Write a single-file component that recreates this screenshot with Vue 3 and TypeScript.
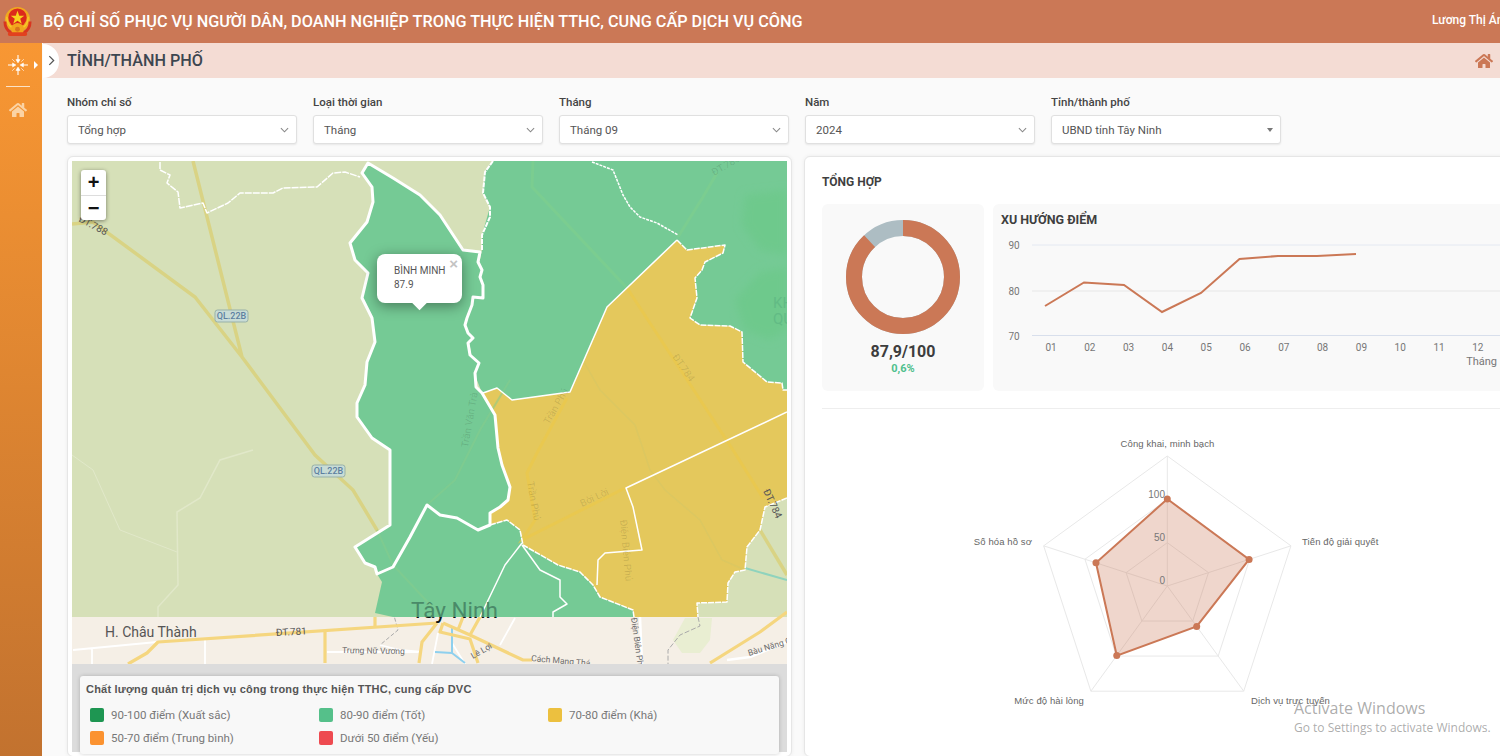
<template>
  <div class="app">
    <header class="topbar">
      <svg class="emblem" viewBox="0 0 32 32">
        <circle cx="16" cy="14" r="13" fill="#f0a81f" />
        <path d="M3 16c0 6 3 10 7 12M29 16c0 6-3 10-7 12" stroke="#d9351f" stroke-width="3" fill="none" />
        <path d="M5 11c0 5 2 9 5 11M27 11c0 5-2 9-5 11" stroke="#f7c92a" stroke-width="1.500" fill="none" />
        <circle cx="16" cy="12" r="9.500" fill="#dc2a1c" />
        <polygon points="16,5 17.800,10 23,10 18.800,13.200 20.400,18.200 16,15.200 11.600,18.200 13.200,13.200 9,10 14.200,10" fill="#f7d31e" />
        <circle cx="16" cy="24" r="6.500" fill="#f2a51e" />
        <circle cx="16" cy="24" r="2.500" fill="#d9751c" />
        <rect x="6" y="27" width="20" height="4" rx="2" fill="#e2411f" />
      </svg>
      <span class="app-title">BỘ CHỈ SỐ PHỤC VỤ NGƯỜI DÂN, DOANH NGHIỆP TRONG THỰC HIỆN TTHC, CUNG CẤP DỊCH VỤ CÔNG</span>
      <span class="user">Lương Thị Ánh</span>
    </header>

    <div class="body">
      <aside class="sidebar">
        <div class="side-top">
          <svg class="nav-icon" viewBox="0 0 24 24" fill="#fff" stroke="#fff" stroke-width="1.300">
            <path d="M0 12h7M24 12h-7M12 0v7M12 24v-7" fill="none" />
            <path d="M9.500 12 5.500 9.500v5zM14.500 12l4-2.500v5zM12 9.500 9.500 5.500h5zM12 14.500l-2.500 4h5z" stroke-width=".6" />
            <path d="M5 5l3 3M19 5l-3 3M5 19l3-3M19 19l-3-3" fill="none" stroke-width=".8" />
          </svg>
          <i class="side-caret"></i>
        </div>
        <div class="side-line"></div>
        <svg class="side-home" viewBox="0 0 576 512"><path :d="homePath" /></svg>
      </aside>

      <main class="main">
        <div class="crumb">
          <span class="crumb-toggle">
            <svg viewBox="0 0 8 12" width="7" height="11" fill="none" stroke="#555" stroke-width="1.400"><path d="M1.500 1 6.500 6l-5 5" /></svg>
          </span>
          <h1>TỈNH/THÀNH PHỐ</h1>
          <svg class="crumb-home" viewBox="0 0 576 512"><path :d="homePath" /></svg>
        </div>

        <div class="filters">
          <div v-for="f in filters" :key="f.label" class="field">
            <label>{{ f.label }}</label>
            <div class="select">
              <span>{{ f.value }}</span>
              <i v-if="f.caret" class="caret"></i>
              <svg v-else viewBox="0 0 10 6" width="9" height="6" fill="none" stroke="#888" stroke-width="1.200"><path d="M1 1l4 4 4-4" /></svg>
            </div>
          </div>
        </div>

        <div class="columns">
          <section class="map-card">
            <div class="map">
              <svg class="map-svg" viewBox="72 161 715 503" width="715" height="503">
                <defs>
                  <clipPath id="below-tile"><rect x="72" y="617" width="715" height="47" /></clipPath>
                  <filter id="soft"><feGaussianBlur stdDeviation="4" /></filter>
                </defs>
                <rect x="72" y="161" width="715" height="456" fill="#d6e0b8" />
                <rect x="72" y="617" width="715" height="47" fill="#f5efe6" />

                <!-- nen: duong mo -->
                <g fill="none" stroke="#e1e8c9">
                  <path d="M72 455 93 470 120 530 177 552" />
                  <path d="M253 450 220 460 200 498 177 512 178 585 158 607 158 617" stroke-width="1.500" />
                </g>
                <g fill="none" stroke="#d9d384" stroke-width="3.500">
                  <path d="M193 161 242 357M72 224 93 222 195 297 242 357 315 455 353 490 377 530 393 565" />
                  <path d="M760 530 787 575" />
                </g>
                <path d="M745 568 787 580" stroke="#8fd3bd" stroke-width="2" fill="none" />

                <!-- duoi manh ban do -->
                <g fill="none" stroke-linejoin="round">
                  <path d="M73 650 157 642M92 648V664M205 640V664M380 645 400 650 422 652M327 652H418M515 618 500 645M438 633 432 664M452 643 465 664" stroke="#fff" stroke-width="1.800" />
                  <path d="M640 617 642 664M727 660 750 657 787 642" stroke="#fff" stroke-width="2.500" />
                  <path d="M685 618H712L710 640 700 653H682L673 640Z" fill="#e9eed2" stroke="none" />
                  <path d="M698 617 700 626 680 635 668 650 668 664" stroke="#aaa" stroke-dasharray="5 2" />
                  <path d="M393 612 398 630 380 645" stroke="#aaa" stroke-dasharray="4 2" />
                  <path d="M452 627V653L465 663M435 652 452 653" stroke="#8ed0ee" stroke-width="2" />
                  <g stroke="#f5d67f" stroke-width="3.200">
                    <path d="M128 664 147 653 158 642 437 623" />
                    <path d="M325 632V663M375 617V626" />
                    <path d="M437 623 422 642 419 663" />
                    <path d="M443 623 470 635 523 660H532M443 623 440 632 470 639 478 663M463 617 458 630M480 617 470 635" />
                    <path d="M710 663 760 632 787 612" />
                  </g>
                </g>

                <!-- vung xanh -->
                <g fill="#75ca95">
                  <path d="M493 161H787V420H500L482 393 475 375 466 325 482 250 482 235 490 207 483 193 485 172Z" />
                  <path :d="westArea" />
                  <path d="M377 574 393 567 410 537 427 505 440 515 457 518 478 530 490 525 507 520 520 530 523 545 558 565 580 572 593 585 600 597 633 610 634 617H393L375 613 382 582Z" />
                </g>
                <g fill="#6ec98c" filter="url(#soft)">
                  <path d="M745 195 787 190V255L760 250 742 225Z" />
                  <path d="M735 300 760 272 787 268V330L770 340 745 330Z" />
                </g>
                <text x="773" y="308" class="map-faint">KH</text>
                <text x="773" y="324" class="map-faint">QU</text>

                <!-- vung vang -->
                <path fill="#e4c85c" d="M483 393 497 388 512 400 570 392 607 307 677 240 687 250 725 245 723 253 705 262 702 270 695 278 697 298 690 318 700 325 730 326 742 332 743 362 767 382 782 383 783 390 787 390V498L765 507 760 530 747 547 745 570 735 572 728 583 727 602 697 603 698 617H634L633 610 600 597 593 585 580 572 558 565 523 545 520 530 507 520 490 525 490 513 508 500 510 487 502 465 498 448 495 415Z" />

                <!-- duong qua vung mau -->
                <g fill="none" stroke-opacity=".55" stroke-width="3">
                  <path d="M533 161 532 187 627 288" stroke="#80cf8c" />
                  <path d="M627 288 733 450 763 498" stroke="#ecc846" />
                  <path d="M717 173 703 197 678 237" stroke="#80cf8c" />
                  <path d="M567 398 537 453 527 473 535 520 522 540 625 488" stroke="#ecc846" />
                  <path d="M584 362 600 390 635 425 650 470 665 490 700 520 722 560 745 570" stroke="#d5c765" stroke-width="1.500" />
                  <path d="M377 530 393 565 435 610" stroke="#85cc8d" stroke-width="2" />
                  <path d="M510 380 480 430 455 480 427 505" stroke="#85cc8d" stroke-width="2" />
                </g>

                <!-- ranh gioi -->
                <g fill="none" stroke="#fff" stroke-linejoin="round">
                  <path stroke-width="3" :d="westArea" />
                  <path stroke-width="2" stroke-dasharray="5 1" d="M493 161 485 172 483 193 490 207 490 217 482 235 482 250" />
                  <path stroke-width="1.500" stroke-dasharray="7 1" d="M160 162 160 170 170 175 167 183 178 192 180 208 203 203 207 213 228 203 240 193 273 193 283 188 317 187 333 173 345 172 360 177" />
                  <path stroke-width="1.500" stroke-dasharray="3 1" d="M592 162 613 170 623 195 630 207 640 217 657 223 678 235" />
                  <path stroke-width="1.500" d="M483 393 497 388 512 400 570 392 607 307 677 240" />
                  <path stroke-width="1.500" stroke-dasharray="6 1" d="M677 240 687 250 725 245 723 253 705 262 702 270 695 278 697 298 690 318 700 325 730 326 742 332 743 362 767 382 782 383 783 390 787 390" />
                  <path stroke-width="1.500" stroke-dasharray="6 1" d="M787 498 765 507 760 530 747 547 745 570 735 572 728 583 727 602 697 603 698 617" />
                  <path stroke-width="1.500" stroke-dasharray="6 1" d="M490 525 507 520 520 530 523 545 558 565 580 572 593 585 600 597 633 610 634 617" />
                  <path stroke-width="1.500" d="M787 412 626 488 633 507 642 550 605 553 598 560 597 585" />
                  <path stroke-width="1.500" d="M522 543 505 565 480 617M522 545 540 570 560 580 560 597 567 604 553 612V617" />
                </g>

                <text x="105" y="637" class="map-place">H. Châu Thành</text>
                <text x="276" y="636" class="map-road" transform="rotate(-3 276 636)">ĐT.781</text>
                <text x="342" y="653" class="map-street" transform="rotate(1 342 653)">Trưng Nữ Vương</text>
                <text x="411" y="618" class="map-city">Tây Ninh</text>
                <text x="411" y="618" class="map-city-dark" clip-path="url(#below-tile)">Tây Ninh</text>
                <text x="473" y="659" class="map-street" transform="rotate(-30 473 659)">Lê Lợi</text>
                <text x="531" y="661" class="map-street" transform="rotate(5 531 661)">Cách Mạng Thá</text>
                <text x="749" y="656" class="map-street" transform="rotate(-17 749 656)">Bàu Năng C</text>
                <text x="631" y="618" class="map-street" transform="rotate(82 631 618)">Điện Biên Phủ</text>
                <text x="78" y="221" class="map-road" transform="rotate(28 78 221)">ĐT.788</text>
                <text x="672" y="357" class="map-tint" transform="rotate(55 672 357)">ĐT.784</text>
                <text x="763" y="491" class="map-road" transform="rotate(65 763 491)">ĐT.784</text>
                <text x="714" y="176" class="map-tint" transform="rotate(-30 714 176)">ĐT.783</text>
                <text x="549" y="425" class="map-tint" transform="rotate(-60 549 425)">Trần Phú</text>
                <text x="582" y="507" class="map-tint" transform="rotate(-25 582 507)">Bời Lời</text>
                <text x="527" y="482" class="map-tint" transform="rotate(80 527 482)">Trần Phú</text>
                <text x="620" y="520" class="map-tint" transform="rotate(85 620 520)">Điện Biên Phủ</text>
                <text x="468" y="448" class="map-tint" transform="rotate(-80 468 448)">Trần Văn Trà</text>

                <g v-for="b in shields" :key="b.y">
                  <rect :x="b.x" :y="b.y" width="33" height="12" rx="2.500" fill="#c8dcd6" stroke="#98b1a8" />
                  <text :x="b.x + 16.5" :y="b.y + 9" text-anchor="middle" class="map-shield">QL.22B</text>
                </g>
              </svg>

              <div class="zoom-ctl">
                <span>+</span>
                <span class="minus">−</span>
              </div>

              <div class="popup">
                <i class="popup-close">×</i>
                <p>BÌNH MINH</p>
                <p>87.9</p>
                <i class="popup-tip"></i>
              </div>
            </div>

            <div class="legend-wrap">
              <div class="legend">
                <h3>Chất lượng quản trị dịch vụ công trong thực hiện TTHC, cung cấp DVC</h3>
                <div class="legend-grid">
                  <div v-for="l in legend" :key="l.text" class="legend-item">
                    <i :style="{ background: l.color }"></i>{{ l.text }}
                  </div>
                </div>
              </div>
            </div>
          </section>

          <section class="stat-card">
            <h2>TỔNG HỢP</h2>
            <div class="stat-top">
              <div class="score-panel">
                <svg viewBox="0 0 114 114" width="114" height="114">
                  <circle cx="57" cy="57" r="49" fill="none" stroke="#adbdc3" stroke-width="16" />
                  <circle cx="57" cy="57" r="49" fill="none" stroke="#cb7856" stroke-width="16" :stroke-dasharray="`${scoreArc} 400`" transform="rotate(-90 57 57)" />
                </svg>
                <strong>87,9/100</strong>
                <em>0,6%</em>
              </div>
              <div class="trend-panel">
                <h3>XU HƯỚNG ĐIỂM</h3>
                <svg class="trend" viewBox="993 230 520 140" width="520" height="140">
                  <line x1="1032" y1="245" x2="1513" y2="245" stroke="#e4e9f2" />
                  <line x1="1032" y1="291" x2="1513" y2="291" stroke="#f0f0f0" stroke-width="2" />
                  <line x1="1032" y1="335.5" x2="1513" y2="335.5" stroke="#d8dfec" />
                  <text v-for="t in yTicks" :key="t.label" x="1014" :y="t.y" text-anchor="middle" class="tick">{{ t.label }}</text>
                  <text v-for="(m, i) in months" :key="m" :x="1051 + i * 38.8" y="351" text-anchor="middle" class="tick">{{ m }}</text>
                  <text x="1497" y="365" text-anchor="end" class="tick thang">Tháng</text>
                  <polyline :points="trendPoints" fill="none" stroke="#cb7856" stroke-width="2" />
                </svg>
              </div>
            </div>
            <div class="divider"></div>
            <svg class="radar" viewBox="822 416 700 340" width="700" height="340">
              <polygon v-for="r in [43.3, 86.6, 130]" :key="r" :points="ring(r)" fill="none" stroke="#e8e8e8" />
              <line v-for="(p, i) in spokes" :key="i" x1="1167.3" y1="586" :x2="p.x" :y2="p.y" stroke="#e8e8e8" />
              <polygon :points="radarPoints.map(p => `${p.x},${p.y}`).join(' ')" fill="#cb7856" fill-opacity=".3" stroke="#cb7856" stroke-width="2" />
              <circle v-for="(p, i) in radarPoints" :key="i" :cx="p.x" :cy="p.y" r="3.5" fill="#cb7856" />
              <text x="1165" y="498" text-anchor="end" class="radar-tick">100</text>
              <text x="1165" y="541" text-anchor="end" class="radar-tick">50</text>
              <text x="1165" y="584" text-anchor="end" class="radar-tick">0</text>
              <text x="1167.5" y="447" text-anchor="middle" class="radar-label">Công khai, minh bạch</text>
              <text x="1302" y="545" class="radar-label">Tiến độ giải quyết</text>
              <text x="1251" y="704" class="radar-label">Dịch vụ trực tuyến</text>
              <text x="1084" y="704" text-anchor="end" class="radar-label">Mức độ hài lòng</text>
              <text x="1032" y="545" text-anchor="end" class="radar-label">Số hóa hồ sơ</text>
            </svg>
          </section>
        </div>
      </main>
    </div>

    <div class="watermark">
      <div class="wm-big">Activate Windows</div>
      <div class="wm-small">Go to Settings to activate Windows.</div>
    </div>
  </div>
</template>

<script setup lang="ts">
const homePath =
  'M280.37 148.26L96 300.11V464a16 16 0 0 0 16 16l112.06-.29a16 16 0 0 0 15.92-16V368a16 16 0 0 1 16-16h64a16 16 0 0 1 16 16v95.64a16 16 0 0 0 16 16.05L464 480a16 16 0 0 0 16-16V300L295.67 148.26a12.19 12.19 0 0 0-15.3 0zM571.6 251.47L488 182.56V44.05a12 12 0 0 0-12-12h-56a12 12 0 0 0-12 12v72.61L318.47 43a48 48 0 0 0-61 0L4.34 251.47a12 12 0 0 0-1.6 16.9l25.5 31A12 12 0 0 0 45.15 301l235.22-193.74a12.19 12.19 0 0 1 15.3 0L530.9 301a12 12 0 0 0 16.9-1.6l25.5-31a12 12 0 0 0-1.7-16.93z'

// ranh gioi xa Binh Minh, toa do theo trang
const westArea =
  'M368 163 393 178 420 195 440 215 463 250 480 252 478 262 482 270 480 277 483 285 483 298 473 297 472 305 467 318 465 325 468 333 473 338 468 343 470 355 479 363 475 373 476 387 482 393 495 415 498 448 502 465 510 487 508 500 500 507 490 513 490 525 478 530 457 518 440 515 427 505 410 537 393 567 377 574 375 567 365 563 355 547 390 525 390 450 372 438 357 417 357 403 365 385 367 362 375 342 372 318 362 298 368 273 355 260 350 243 367 222 373 202 372 187 362 173Z'

const filters = [
  { label: 'Nhóm chỉ số', value: 'Tổng hợp' },
  { label: 'Loại thời gian', value: 'Tháng' },
  { label: 'Tháng', value: 'Tháng 09' },
  { label: 'Năm', value: '2024' },
  { label: 'Tỉnh/thành phố', value: 'UBND tỉnh Tây Ninh', caret: true },
]

const legend = [
  { text: '90-100 điểm (Xuất sắc)', color: '#1e9652' },
  { text: '80-90 điểm (Tốt)', color: '#55c08a' },
  { text: '70-80 điểm (Khá)', color: '#ecc03f' },
  { text: '50-70 điểm (Trung bình)', color: '#fb9230' },
  { text: 'Dưới 50 điểm (Yếu)', color: '#ee4a50' },
]

const shields = [
  { x: 215, y: 310 },
  { x: 312, y: 465 },
]

const scoreArc = (2 * Math.PI * 49 * 87.9) / 100

const months = ['01', '02', '03', '04', '05', '06', '07', '08', '09', '10', '11', '12']
const yTicks = [
  { label: '90', y: 249 },
  { label: '80', y: 295 },
  { label: '70', y: 340 },
]
const trendPoints =
  '1045,306 1084,282.5 1124,285 1162,312 1201,293 1239.5,259 1278,256 1317,256 1356,254'

// radar: tam 1167.3,586 - ban kinh 130 la muc 150
function vertex(i: number, r: number) {
  const a = (i * 72 * Math.PI) / 180
  return { x: 1167.3 + r * Math.sin(a), y: 586 - r * Math.cos(a) }
}
function ring(r: number) {
  return [0, 1, 2, 3, 4].map(i => {
    const p = vertex(i, r)
    return `${p.x},${p.y}`
  }).join(' ')
}
const spokes = [0, 1, 2, 3, 4].map(i => vertex(i, 130))
const radarPoints = [87, 86, 50, 86, 75].map((r, i) => vertex(i, r))
</script>

<style scoped>
.app {
  position: relative;
  width: 1500px;
  height: 756px;
  overflow: hidden;
  font-family: Roboto, "Noto Sans", sans-serif;
  background: #fafafa;
  color: #444;
}

.topbar {
  height: 43px;
  background: #cb7856;
  display: flex;
  align-items: center;
  padding-left: 2px;
  color: #fff;
}
.emblem {
  width: 31px;
  height: 31px;
  flex: none;
}
.app-title {
  margin-left: 10px;
  font-size: 16.25px;
  font-weight: 500;
  white-space: nowrap;
}
.user {
  margin-left: auto;
  margin-right: -10px;
  font-size: 12px;
  font-weight: 500;
  white-space: nowrap;
  padding-bottom: 4px;
}

.body {
  display: flex;
  height: 713px;
}
.sidebar {
  width: 42px;
  margin-right: 1px;
  flex: none;
  background: linear-gradient(180deg, #f89733 0%, #c2722f 100%);
  display: flex;
  flex-direction: column;
  align-items: flex-start;
}
.side-top {
  height: 43px;
  display: flex;
  align-items: center;
  padding-left: 8px;
  gap: 6px;
}
.nav-icon {
  width: 20px;
  height: 20px;
}
.side-caret {
  border-left: 4px solid #fff;
  border-top: 4px solid transparent;
  border-bottom: 4px solid transparent;
}
.side-line {
  width: 24px;
  height: 1px;
  margin-left: 6px;
  background: #fbe3c8;
}
.side-home {
  width: 18px;
  height: 16px;
  margin: 15px 0 0 9px;
  fill: #fbd3a4;
}

.main {
  flex: 1;
  min-width: 0;
  overflow: hidden;
}
.crumb {
  height: 35px;
  background: #f4dcd4;
  display: flex;
  align-items: center;
}
.crumb-toggle {
  width: 16px;
  height: 34px;
  background: #fff;
  border-radius: 0 17px 17px 0;
  display: flex;
  align-items: center;
  justify-content: center;
  flex: none;
}
.crumb h1 {
  margin: 0 0 0 8px;
  font-size: 16.2px;
  font-weight: 500;
  color: #3d4650;
}
.crumb-home {
  width: 18px;
  height: 16px;
  margin-left: auto;
  margin-right: 7px;
  fill: #cb7856;
}

.filters {
  display: grid;
  grid-template-columns: repeat(5, 230px);
  gap: 16px;
  padding: 17px 0 0 24px;
}
.field label {
  display: block;
  font-size: 11.5px;
  font-weight: 500;
  line-height: 14px;
  color: #444;
  margin-bottom: 6px;
}
.select {
  height: 29px;
  box-sizing: border-box;
  background: #fff;
  border: 1px solid #e0e0e0;
  border-radius: 3px;
  box-shadow: 0 1px 2px rgba(0, 0, 0, 0.08);
  display: flex;
  align-items: center;
  justify-content: space-between;
  padding: 0 7px 0 10px;
  font-size: 11.5px;
  color: #555;
}
.caret {
  border-top: 4px solid #777;
  border-left: 3.5px solid transparent;
  border-right: 3.5px solid transparent;
}

.columns {
  display: flex;
  gap: 12px;
  padding: 12px 0 0 24px;
  width: 1500px;
}
.map-card {
  width: 725px;
  flex: none;
  box-sizing: border-box;
  padding: 4px 4px 0;
  background: #fff;
  border: 1px solid #e6e6e6;
  border-radius: 6px;
  box-shadow: 0 0 4px rgba(0, 0, 0, 0.06);
}
.map {
  position: relative;
  height: 503px;
  overflow: hidden;
}
.map-svg {
  display: block;
}
.map-place {
  font: 14px Roboto, sans-serif;
  fill: #555;
}
.map-road {
  font: 10px Roboto, sans-serif;
  fill: #555;
}
.map-street {
  font: 8.5px Roboto, sans-serif;
  fill: #6b6b6b;
}
.map-city {
  font: 22.5px Roboto, sans-serif;
  fill: #4a8a69;
}
.map-city-dark {
  font: 22.5px Roboto, sans-serif;
  fill: #111;
}
.map-tint {
  font: 10px Roboto, sans-serif;
  fill: #000;
  fill-opacity: 0.12;
}
.map-faint {
  font: 15px Roboto, sans-serif;
  fill: #62bb85;
}
.map-shield {
  font: 500 9px Roboto, sans-serif;
  fill: #5d7fa0;
}

.zoom-ctl {
  position: absolute;
  left: 9px;
  top: 9px;
  width: 25px;
  background: #fff;
  border-radius: 3px;
  box-shadow: 0 1px 4px rgba(0, 0, 0, 0.45);
  color: #111;
}
.zoom-ctl span {
  display: block;
  height: 25px;
  line-height: 25px;
  text-align: center;
  font: 700 20px/25px "Liberation Sans", sans-serif;
}
.zoom-ctl .minus {
  border-top: 1px solid #ddd;
  height: 24px;
  line-height: 24px;
}

.popup {
  position: absolute;
  left: 305px;
  top: 93px;
  width: 85px;
  height: 49px;
  box-sizing: border-box;
  padding: 10px 0 0 17px;
  background: #fff;
  border-radius: 8px;
  box-shadow: 0 3px 14px rgba(0, 0, 0, 0.4);
  font-size: 10px;
  line-height: 14px;
  color: #555;
}
.popup p {
  margin: 0;
}
.popup-close {
  position: absolute;
  right: 4px;
  top: 2px;
  font: 700 15px/15px "Liberation Sans", sans-serif;
  color: #c3c3c3;
}
.popup-tip {
  position: absolute;
  left: 37px;
  bottom: -5px;
  width: 11px;
  height: 11px;
  background: #fff;
  transform: rotate(45deg);
}

.legend-wrap {
  background: #dcdcdc;
  padding: 12px 8px 0;
  height: 88px;
  box-sizing: border-box;
  margin-bottom: 4px;
}
.legend {
  height: 78px;
  box-sizing: border-box;
  padding: 6px 6px 0;
  background: #f8f8f8;
  border-radius: 3px;
  box-shadow: 0 0 4px rgba(0, 0, 0, 0.2);
}
.legend h3 {
  margin: 0;
  font: 700 11px/14px "Liberation Sans", sans-serif;
  letter-spacing: 0.21px;
  color: #555;
}
.legend-grid {
  display: grid;
  grid-template-columns: repeat(3, 229px);
  row-gap: 9px;
  padding: 12px 0 0 4px;
}
.legend-item {
  display: flex;
  align-items: center;
  gap: 7px;
  height: 14px;
  font-size: 11.5px;
  color: #777;
}
.legend-item i {
  width: 14px;
  height: 14px;
  border-radius: 2px;
  flex: none;
}

.stat-card {
  width: 760px;
  flex: none;
  box-sizing: border-box;
  padding: 0 0 0 17px;
  background: #fff;
  border: 1px solid #e6e6e6;
  border-radius: 6px;
  box-shadow: 0 0 4px rgba(0, 0, 0, 0.06);
}
.stat-card h2 {
  margin: 18px 0 14px;
  font-size: 12px;
  line-height: 15px;
  font-weight: 700;
  color: #3f3f3f;
}
.stat-top {
  display: flex;
  gap: 9px;
}
.score-panel {
  width: 162px;
  height: 187px;
  flex: none;
  background: #f9f9f9;
  border-radius: 6px;
  display: flex;
  flex-direction: column;
  align-items: center;
  padding-top: 16px;
  box-sizing: border-box;
}
.score-panel strong {
  margin-top: 8px;
  font-size: 16px;
  line-height: 20px;
  font-weight: 700;
  color: #3d3d3d;
}
.score-panel em {
  font-style: normal;
  font-size: 11px;
  line-height: 14px;
  font-weight: 700;
  color: #4fc08d;
}
.trend-panel {
  width: 520px;
  height: 187px;
  flex: none;
  background: #f9f9f9;
  border-radius: 6px;
  box-sizing: border-box;
}
.trend-panel h3 {
  margin: 0;
  padding: 8px 0 0 8px;
  font-size: 12.5px;
  line-height: 15px;
  font-weight: 700;
  color: #3f3f3f;
}
.trend {
  display: block;
  margin-top: 3px;
}
.tick {
  font: 10px Roboto, sans-serif;
  fill: #777;
}
.thang {
  font-size: 11px;
}
.divider {
  height: 1px;
  background: #eee;
  margin-top: 17px;
}
.radar {
  display: block;
  margin-top: 7px;
}
.radar-label {
  font: 9.5px "Liberation Sans", sans-serif;
  letter-spacing: 0.1px;
  fill: #666;
}
.radar-tick {
  font: 10px "Liberation Sans", sans-serif;
  fill: #777;
}

.watermark {
  position: absolute;
  left: 1294px;
  top: 698px;
  font-family: "Open Sans", sans-serif;
  color: rgba(120, 120, 120, 0.62);
  white-space: nowrap;
  pointer-events: none;
}
.wm-big {
  font-size: 16px;
  line-height: 21px;
}
.wm-small {
  font-size: 12px;
  line-height: 17px;
}
</style>

<style>
html,
body {
  margin: 0;
  overflow: hidden;
}
</style>
